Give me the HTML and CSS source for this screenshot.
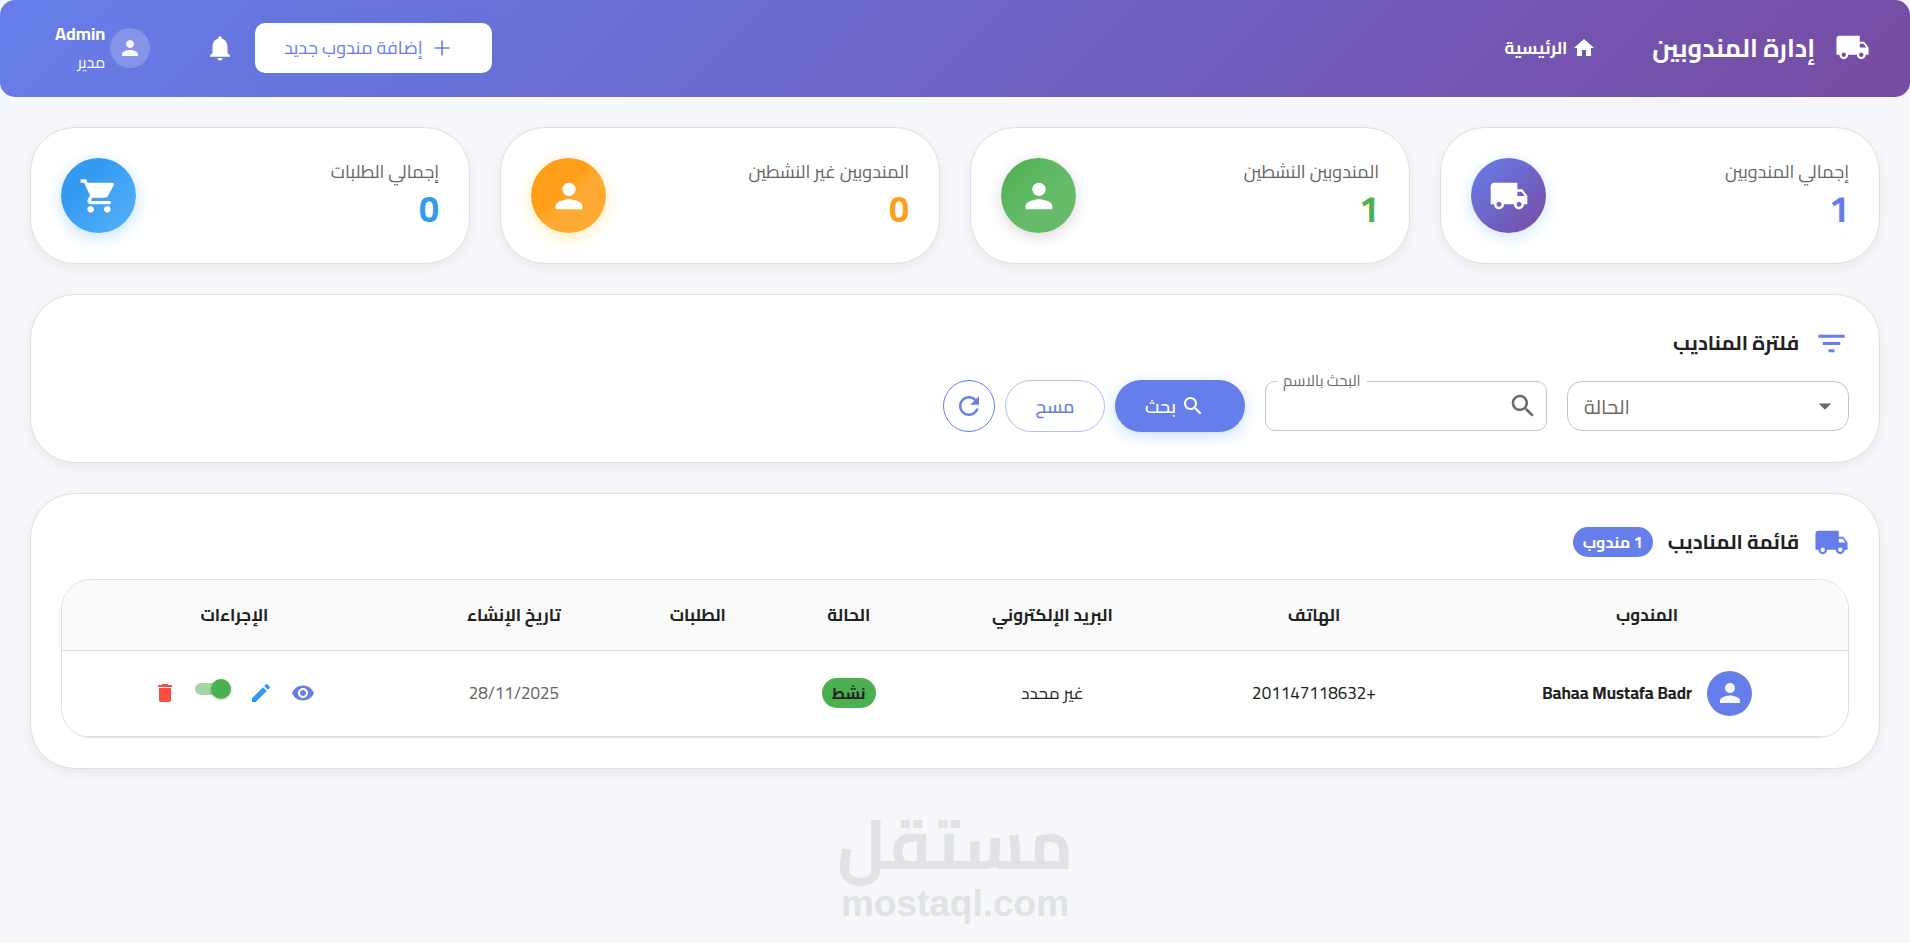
FILE: index.html
```html
<!DOCTYPE html>
<html lang="ar" dir="rtl">
<head>
    <meta charset="UTF-8">
    <meta name="viewport" content="width=device-width, initial-scale=1.0">
    <title>إدارة المندوبين</title>
    <link rel="stylesheet" href="styles.css">
</head>
<body>
    <!-- Icons -->
    <svg class="icon-defs" aria-hidden="true">
        <symbol id="i-truck" viewBox="0 0 24 24"><path d="M20 8h-3V4H3c-1.100 0-2 .9-2 2v11h2c0 1.660 1.340 3 3 3s3-1.340 3-3h6c0 1.660 1.340 3 3 3s3-1.340 3-3h2v-5l-3-4zM6 18.500c-.83 0-1.500-.67-1.500-1.500s.67-1.500 1.500-1.500 1.500.67 1.500 1.500-.67 1.500-1.500 1.500zm13.500-9l1.960 2.500H17V9.500h2.500zm-1.500 9c-.83 0-1.500-.67-1.500-1.500s.67-1.500 1.500-1.500 1.500.67 1.500 1.500-.67 1.500-1.500 1.500z"/></symbol>
        <symbol id="i-home" viewBox="0 0 24 24"><path d="M10 20v-6h4v6h5v-8h3L12 3 2 12h3v8z"/></symbol>
        <symbol id="i-plus" viewBox="0 0 24 24"><path d="M19.500 12.800h-6.700v6.700h-1.600v-6.700H4.500v-1.600h6.700V4.500h1.600v6.700h6.700z"/></symbol>
        <symbol id="i-bell" viewBox="0 0 24 24"><path d="M12 22c1.100 0 2-.9 2-2h-4c0 1.100.9 2 2 2zm6-6v-5c0-3.070-1.630-5.640-4.500-6.320V4c0-.83-.67-1.500-1.500-1.500s-1.500.67-1.500 1.500v.68C7.640 5.360 6 7.920 6 11v5l-2 2v1h16v-1l-2-2z"/></symbol>
        <symbol id="i-person" viewBox="0 0 24 24"><path d="M12 12c2.210 0 4-1.790 4-4s-1.790-4-4-4-4 1.790-4 4 1.790 4 4 4zm0 2c-2.670 0-8 1.340-8 4v2h16v-2c0-2.660-5.330-4-8-4z"/></symbol>
        <symbol id="i-cart" viewBox="0 0 24 24"><path d="M7 18c-1.100 0-1.990.9-1.990 2S5.900 22 7 22s2-.9 2-2-.9-2-2-2zM1 2v2h2l3.600 7.590-1.350 2.450c-.16.28-.25.61-.25.96 0 1.100.9 2 2 2h12v-2H7.420c-.14 0-.25-.11-.25-.25l.03-.12.9-1.630h7.450c.75 0 1.410-.41 1.750-1.030l3.580-6.490c.08-.14.12-.31.12-.48 0-.55-.45-1-1-1H5.210l-.94-2H1zm16 16c-1.100 0-1.990.9-1.990 2s.89 2 1.990 2 2-.9 2-2-.9-2-2-2z"/></symbol>
        <symbol id="i-filter" viewBox="0 0 24 24"><path d="M10 18h4v-2h-4v2zM3 6v2h18V6H3zm3 7h12v-2H6v2z"/></symbol>
        <symbol id="i-search" viewBox="0 0 24 24"><path d="M15.500 14h-.79l-.28-.27C15.410 12.590 16 11.110 16 9.500 16 5.910 13.090 3 9.500 3S3 5.910 3 9.500 5.910 16 9.500 16c1.610 0 3.090-.59 4.230-1.570l.27.28v.79l5 4.990L20.490 19l-4.990-5zm-6 0C7.010 14 5 11.990 5 9.500S7.010 5 9.500 5 14 7.010 14 9.500 11.990 14 9.500 14z"/></symbol>
        <symbol id="i-arrow" viewBox="0 0 24 24"><path d="M7 10l5 5 5-5z"/></symbol>
        <symbol id="i-refresh" viewBox="0 0 24 24"><path d="M17.650 6.350C16.200 4.900 14.210 4 12 4c-4.420 0-7.990 3.580-7.990 8s3.570 8 7.990 8c3.730 0 6.840-2.550 7.730-6h-2.080c-.82 2.330-3.040 4-5.650 4-3.310 0-6-2.690-6-6s2.690-6 6-6c1.660 0 3.140.69 4.220 1.780L13 11h7V4l-2.350 2.350z"/></symbol>
        <symbol id="i-eye" viewBox="0 0 24 24"><path d="M12 4.500C7 4.500 2.730 7.610 1 12c1.730 4.390 6 7.500 11 7.500s9.270-3.110 11-7.500c-1.730-4.390-6-7.500-11-7.500zM12 17c-2.760 0-5-2.240-5-5s2.240-5 5-5 5 2.240 5 5-2.240 5-5 5zm0-8c-1.660 0-3 1.340-3 3s1.340 3 3 3 3-1.340 3-3-1.340-3-3-3z"/></symbol>
        <symbol id="i-edit" viewBox="0 0 24 24"><path d="M3 17.250V21h3.750L17.810 9.940l-3.750-3.750L3 17.250zM20.710 7.040c.39-.39.39-1.020 0-1.410l-2.340-2.340c-.39-.39-1.020-.39-1.410 0l-1.830 1.830 3.750 3.750 1.830-1.830z"/></symbol>
        <symbol id="i-delete" viewBox="0 0 24 24"><path d="M6 19c0 1.100.9 2 2 2h8c1.100 0 2-.9 2-2V7H6v12zM19 4h-3.500l-1-1h-5l-1 1H5v2h14V4z"/></symbol>
    </svg>

    <header class="topbar">
        <svg class="icon icon-lg"><use href="#i-truck"/></svg>
        <h1>إدارة المندوبين</h1>
        <a class="home-link" href="#">
            <svg class="icon"><use href="#i-home"/></svg>
            الرئيسية
        </a>
        <button class="add-button" type="button">
            <svg class="icon"><use href="#i-plus"/></svg>
            إضافة مندوب جديد
        </button>
        <button class="bell-button" type="button" aria-label="الإشعارات">
            <svg class="icon icon-md"><use href="#i-bell"/></svg>
        </button>
        <div class="user">
            <span class="user-avatar"><svg class="icon"><use href="#i-person"/></svg></span>
            <div class="user-text">
                <span class="user-name">Admin</span>
                <span class="user-role">مدير</span>
            </div>
        </div>
    </header>

    <main>
        <section class="stats">
            <div class="card stat purple">
                <div>
                    <div class="stat-label">إجمالي المندوبين</div>
                    <div class="stat-value">1</div>
                </div>
                <span class="stat-icon"><svg class="icon icon-xl"><use href="#i-truck"/></svg></span>
            </div>
            <div class="card stat green">
                <div>
                    <div class="stat-label">المندوبين النشطين</div>
                    <div class="stat-value">1</div>
                </div>
                <span class="stat-icon"><svg class="icon icon-xl"><use href="#i-person"/></svg></span>
            </div>
            <div class="card stat orange">
                <div>
                    <div class="stat-label">المندوبين غير النشطين</div>
                    <div class="stat-value">0</div>
                </div>
                <span class="stat-icon"><svg class="icon icon-xl"><use href="#i-person"/></svg></span>
            </div>
            <div class="card stat blue">
                <div>
                    <div class="stat-label">إجمالي الطلبات</div>
                    <div class="stat-value">0</div>
                </div>
                <span class="stat-icon"><svg class="icon icon-xl"><use href="#i-cart"/></svg></span>
            </div>
        </section>

        <section class="card filter">
            <div class="card-title">
                <svg class="icon icon-lg"><use href="#i-filter"/></svg>
                <h2>فلترة المناديب</h2>
            </div>
            <form class="filter-row">
                <div class="field field-select">
                    <select id="status" aria-label="الحالة">
                        <option value="">الحالة</option>
                        <option value="active">نشط</option>
                        <option value="inactive">غير نشط</option>
                    </select>
                    <svg class="icon icon-md"><use href="#i-arrow"/></svg>
                </div>
                <div class="field">
                    <svg class="icon icon-md"><use href="#i-search"/></svg>
                    <input type="text" id="name">
                    <label for="name">البحث بالاسم</label>
                </div>
                <div class="filter-buttons">
                    <button class="search-button" type="button">
                        <svg class="icon"><use href="#i-search"/></svg>
                        بحث
                    </button>
                    <button class="clear-button" type="reset">مسح</button>
                    <button class="refresh-button" type="button" aria-label="تحديث">
                        <svg class="icon icon-md"><use href="#i-refresh"/></svg>
                    </button>
                </div>
            </form>
        </section>

        <section class="card list">
            <div class="card-title">
                <svg class="icon icon-lg"><use href="#i-truck"/></svg>
                <h2>قائمة المناديب</h2>
                <span class="chip">1 مندوب</span>
            </div>
            <div class="table-wrap">
                <table>
                    <thead>
                        <tr>
                            <th class="col-agent">المندوب</th>
                            <th class="col-phone">الهاتف</th>
                            <th class="col-email">البريد الإلكتروني</th>
                            <th class="col-status">الحالة</th>
                            <th class="col-orders">الطلبات</th>
                            <th class="col-date">تاريخ الإنشاء</th>
                            <th class="col-actions">الإجراءات</th>
                        </tr>
                    </thead>
                    <tbody>
                        <tr>
                            <td>
                                <div class="agent">
                                    <span class="agent-avatar"><svg class="icon icon-md"><use href="#i-person"/></svg></span>
                                    <span class="agent-name">Bahaa Mustafa Badr</span>
                                </div>
                            </td>
                            <td>+201147118632</td>
                            <td>غير محدد</td>
                            <td><span class="chip chip-green">نشط</span></td>
                            <td></td>
                            <td class="date">28/11/2025</td>
                            <td>
                                <div class="actions">
                                    <button class="view" type="button" aria-label="عرض"><svg class="icon"><use href="#i-eye"/></svg></button>
                                    <button class="edit" type="button" aria-label="تعديل"><svg class="icon"><use href="#i-edit"/></svg></button>
                                    <input class="switch" type="checkbox" aria-label="تفعيل" checked>
                                    <button class="delete" type="button" aria-label="حذف"><svg class="icon"><use href="#i-delete"/></svg></button>
                                </div>
                            </td>
                        </tr>
                    </tbody>
                </table>
            </div>
        </section>
    </main>

    <footer>
        <span class="brand-ar">مستقل</span>
        <span class="brand-en">mostaql.com</span>
    </footer>
</body>
</html>
```
FILE: styles.css
```css
* {
    box-sizing: border-box;
}

body {
    margin: 0;
    background: #f5f7fb;
    color: #212121;
    font-family: Cairo, "Noto Sans Arabic", "Noto Sans", "DejaVu Sans", sans-serif;
    font-size: 17px;
    line-height: 24px;
}

button,
input,
select {
    font-family: inherit;
    font-size: 18px;
}

button {
    display: flex;
    align-items: center;
    justify-content: center;
    padding: 0;
    border: none;
    background: none;
    cursor: pointer;
}

h1,
h2 {
    margin: 0;
}

.icon-defs {
    display: none;
}

.icon {
    display: block;
    flex: none;
    width: 24px;
    height: 24px;
    fill: currentColor;
}

.icon-md {
    width: 30px;
    height: 30px;
}

.icon-lg {
    width: 35px;
    height: 35px;
}

.icon-xl {
    width: 40px;
    height: 40px;
}

/* Header */
.topbar {
    display: flex;
    align-items: center;
    min-height: 97px;
    padding: 0 40px 2px 55px;
    border-radius: 15px;
    background: linear-gradient(135deg, #667eea 0%, #764ba2 100%);
    color: #fff;
}

.topbar h1 {
    margin-right: 20px;
    font-size: 25px;
    line-height: 40px;
}

.home-link {
    display: flex;
    align-items: center;
    gap: 5px;
    margin-right: 56px;
    color: #fff;
    font-weight: 700;
    text-decoration: none;
}

.add-button {
    gap: 7px;
    width: 237px;
    height: 50px;
    margin-right: auto;
    padding-right: 10px;
    border-radius: 10px;
    background: #fff;
    color: #667eea;
    box-shadow: 0 4px 15px rgba(66, 133, 244, 0.3);
}

.bell-button {
    margin: 0 20px 0 55px;
    color: #fff;
}

.user {
    display: flex;
    align-items: center;
    gap: 5px;
}

.user-avatar {
    display: flex;
    align-items: center;
    justify-content: center;
    width: 40px;
    height: 40px;
    border-radius: 50%;
    background: rgba(255, 255, 255, 0.2);
    color: #f5f7fb;
}

.user-text {
    display: flex;
    flex-direction: column;
    line-height: 28px;
}

.user-name {
    font-size: 18px;
    font-weight: 700;
}

.user-role {
    font-size: 16px;
}

/* Cards */
main {
    display: flex;
    flex-direction: column;
    gap: 30px;
    padding: 30px;
}

.card {
    padding: 30px;
    border: 1px solid #e0e0e0;
    border-radius: 45px;
    background: #fff;
    box-shadow: 0 4px 12px rgba(0, 0, 0, 0.06);
}

.stats {
    display: grid;
    grid-template-columns: repeat(4, 1fr);
    gap: 30px;
}

.stat {
    display: flex;
    align-items: center;
    justify-content: space-between;
}

.stat-label {
    color: #666;
    font-size: 18px;
    line-height: 28px;
}

.stat-value {
    font-size: 36px;
    font-weight: 700;
    line-height: 47px;
}

.stat-icon {
    display: flex;
    align-items: center;
    justify-content: center;
    width: 75px;
    height: 75px;
    border-radius: 50%;
    color: #fff;
}

.purple .stat-value { color: #667eea; }
.green .stat-value { color: #4caf50; }
.orange .stat-value { color: #ff9f1a; }
.blue .stat-value { color: #339af0; }

.purple .stat-icon {
    background: linear-gradient(135deg, #667eea, #764ba2);
    box-shadow: 0 4px 15px rgba(51, 154, 240, 0.25);
}

.green .stat-icon {
    background: linear-gradient(135deg, #4caf50, #66bb6a 60%);
    box-shadow: 0 4px 15px rgba(0, 0, 0, 0.15);
}

.orange .stat-icon {
    background: linear-gradient(135deg, #ff9f1a 40%, #ffab33 60%);
    box-shadow: 0 4px 15px rgba(255, 193, 7, 0.3);
}

.blue .stat-icon {
    background: linear-gradient(135deg, #339af0 30%, #4dabf7 80%);
    box-shadow: 0 4px 15px rgba(51, 154, 240, 0.3);
}

.card-title {
    display: flex;
    align-items: center;
    gap: 15px;
    color: #667eea;
}

.card-title h2 {
    color: #212121;
    font-size: 20px;
    line-height: 36px;
}

/* Filter */
.filter-row {
    display: flex;
    align-items: center;
    gap: 20px;
    margin-top: 19px;
}

.field {
    position: relative;
    display: flex;
    align-items: center;
    flex: 0 1 282px;
    height: 50px;
    padding: 0 8px;
    border: 1px solid #c4c4c4;
    border-radius: 10px;
    color: #6f6666;
}

.field-select {
    border-radius: 15px;
}

.field input,
.field select {
    width: 100%;
    height: 100%;
    border: none;
    outline: none;
    background: none;
    color: #6f6666;
}

.field select {
    appearance: none;
    position: absolute;
    inset: 0;
    padding: 0 16px;
    direction: ltr;
    font-size: 20px;
}

.field label {
    position: absolute;
    top: -13px;
    left: 11px;
    padding: 0 6px;
    background: #fff;
    font-size: 15px;
}

.filter-buttons {
    display: flex;
    gap: 10px;
}

.filter-buttons button {
    height: 52px;
    border-radius: 26px;
}

.filter-buttons .search-button {
    gap: 5px;
    width: 130px;
    padding-right: 10px;
    background: #667eea;
    color: #fff;
    font-weight: 600;
    box-shadow: 0 4px 15px rgba(66, 153, 255, 0.3);
}

.filter-buttons .clear-button {
    width: 100px;
    border: 1px solid #b3bff5;
    color: #667eea;
    font-weight: 600;
}

.filter-buttons .refresh-button {
    width: 52px;
    border: 1px solid #667eea;
    color: #667eea;
}

/* List */
.chip {
    display: inline-block;
    padding: 0 10px;
    border-radius: 15px;
    background: #667eea;
    color: #fff;
    font-size: 16px;
    font-weight: 700;
    line-height: 30px;
}

.chip-green {
    background: #4caf50;
    color: #212121;
}

.table-wrap {
    margin-top: 19px;
    border: 1px solid #e0e0e0;
    border-radius: 30px;
    overflow: hidden;
}

table {
    width: 100%;
    table-layout: fixed;
    border-collapse: collapse;
    text-align: center;
}

th,
td {
    padding: 0;
    border-bottom: 1px solid #e0e0e0;
}

th {
    height: 70px;
    background: #fafafa;
    font-weight: 700;
}

td {
    height: 86px;
}

.col-agent { width: 22.5%; }
.col-phone { width: 14.8%; }
.col-email { width: 14.5%; }
.col-status { width: 8.3%; }
.col-orders { width: 8.6%; }
.col-date { width: 12%; }
.col-actions { width: 19.3%; }

.agent {
    display: flex;
    align-items: center;
    justify-content: center;
    gap: 15px;
}

.agent-avatar {
    display: flex;
    align-items: center;
    justify-content: center;
    width: 45px;
    height: 45px;
    border-radius: 50%;
    background: #667eea;
    color: #f5f7fb;
}

.agent-name {
    font-weight: 700;
}

.date {
    color: #666;
}

.actions {
    display: flex;
    align-items: center;
    justify-content: center;
    gap: 18px;
}

.view { color: #667eea; }
.edit { color: #339af0; }
.delete { color: #f94c43; }

.switch {
    appearance: none;
    display: flex;
    align-items: center;
    width: 36px;
    height: 12px;
    margin: 0 0 8px;
    border-radius: 6px;
    background: #a2d6a5;
    cursor: pointer;
}

.switch::before {
    content: "";
    width: 20px;
    height: 20px;
    border-radius: 50%;
    background: #4caf50;
    box-shadow: 0 1px 3px rgba(0, 0, 0, 0.2);
}

/* Brand mark */
footer {
    display: flex;
    flex-direction: column;
    align-items: center;
    padding-top: 5px;
    color: #e0e2e3;
    font-weight: 700;
}

.brand-ar {
    font-size: 69px;
    line-height: 80px;
}

.brand-en {
    font-family: "Liberation Sans", Arial, sans-serif;
    font-size: 37px;
    line-height: 40px;
}
```
